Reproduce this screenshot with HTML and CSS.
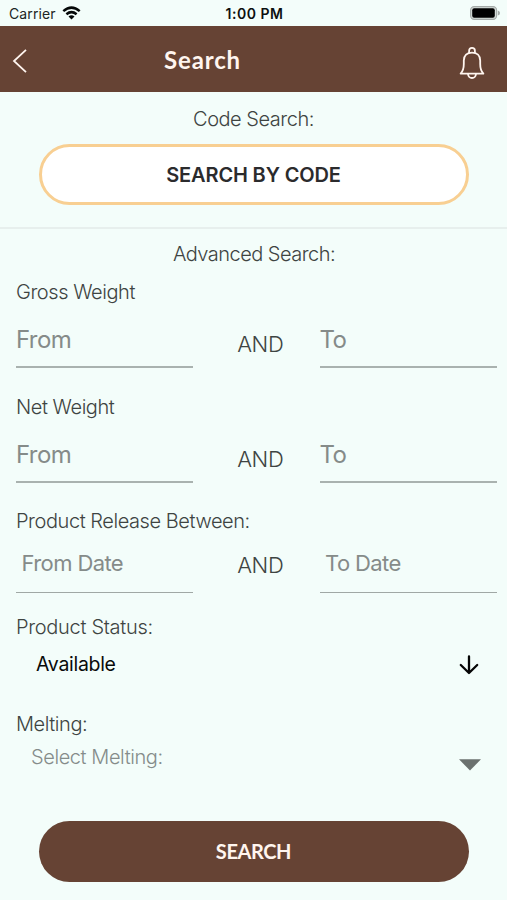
FILE: index.html
```html
<!DOCTYPE html>
<html lang="en">
<head>
<meta charset="utf-8">
<title>Search</title>
<link rel="stylesheet" href="styles.css">
</head>
<body>
<div class="status-bar">
  <div class="carrier"><span>Carrier</span>
    <svg class="wifi" width="19" height="14" viewBox="0 0 19 14"><path d="M9.5 13.5 6.5 10.4Q9.5 7.9 12.5 10.4Z" fill="#050808"/><path d="M4.4 8.2Q9.5 4 14.6 8.2M1.3 5.1Q9.5-1.8 17.7 5.1" fill="none" stroke="#050808" stroke-width="2.5"/></svg>
  </div>
  <span class="clock">1:00 PM</span>
  <svg class="battery" width="30" height="14" viewBox="0 0 30 14"><rect x=".6" y=".6" width="26" height="12.8" rx="3.6" fill="#d5dcd9" stroke="#a4aaa8" stroke-width="1.1"/><rect x="2.2" y="2.2" width="22.6" height="9.6" rx="2" fill="#000"/><path d="M27.8 4.5Q30 5 30 7T27.8 9.5Z" fill="#a4aaa8"/></svg>
</div>
<header class="app-bar">
  <svg class="back" width="16" height="26" viewBox="0 0 16 26"><path d="M14 1.8 2 13 14 24.2" fill="none" stroke="#fff5ef" stroke-width="1.8"/></svg>
  <h1>Search</h1>
  <svg class="bell" width="26" height="34" viewBox="0 0 26 34"><g fill="none" stroke="#fff5ef" stroke-width="1.8" stroke-linejoin="round"><path d="M10.1 7.2V4.7Q10.1 1.9 13 1.9T15.9 4.7V7.2"/><path d="M1.6 27.6Q4.8 24.5 4.8 18V14.5C4.8 9.5 8 6.6 13 6.6S21.2 9.5 21.2 14.5V18Q21.2 24.5 24.4 27.6Z"/><path d="M9 28Q9.5 32 13 32T17 28"/></g></svg>
</header>
<main>
  <section class="code-search">
    <h2>Code Search:</h2>
    <button class="pill outline">SEARCH BY CODE</button>
  </section>
  <form class="advanced">
    <h2 class="advanced-title">Advanced Search:</h2>
    <div class="label gross">Gross Weight</div>
    <div class="range"><div class="field">From</div><div class="and">AND</div><div class="field">To</div></div>
    <div class="label net">Net Weight</div>
    <div class="range"><div class="field">From</div><div class="and">AND</div><div class="field">To</div></div>
    <div class="label release">Product Release Between:</div>
    <div class="range dates"><div class="field">From Date</div><div class="and">AND</div><div class="field">To Date</div></div>
    <div class="label status">Product Status:</div>
    <div class="select available"><span>Available</span>
      <svg width="20" height="20" viewBox="0 0 20 20"><path d="M10 1.5V18M1.8 10 10 18 18.2 10" fill="none" stroke="#050505" stroke-width="2.3" stroke-linecap="round" stroke-linejoin="round"/></svg>
    </div>
    <div class="label melting">Melting:</div>
    <div class="select melt"><span>Select Melting:</span>
      <svg width="22" height="12" viewBox="0 0 22 12"><path d="M0 .3H22L11 11.5Z" fill="#6b716f"/></svg>
    </div>
    <button type="button" class="pill solid">SEARCH</button>
  </form>
</main>
</body>
</html>
```
FILE: styles.css
```css
* { box-sizing: border-box; }
body {
  margin: 0;
  height: 900px;
  overflow: hidden;
  background: #f3fdfa;
  color: #3e4442;
  font-family: Inter, sans-serif;
  font-weight: 300;
}
h1, h2 { margin: 0; font-weight: inherit; }
svg { display: block; flex: none; }

.status-bar {
  display: grid;
  grid-template-columns: 1fr auto 1fr;
  align-items: center;
  height: 25.5px;
  padding: 1px 7px 0 9px;
  font-size: 14px;
  color: #202524;
}
.carrier { display: flex; align-items: center; gap: 6px; font-weight: 400; letter-spacing: 0.1px; }
.clock { font-weight: 600; letter-spacing: 0.5px; color: #0d1010; }
.battery { justify-self: end; }

.app-bar {
  display: flex;
  align-items: center;
  height: 66.5px;
  padding: 4px 22px 0 12px;
  background: #664334;
  color: #fff5ef;
}
.app-bar h1 {
  flex: 1;
  padding: 0 0 2px 136px;
  font: 700 24px/30px Lato, sans-serif;
  letter-spacing: 0.85px;
}
.bell { margin-top: 5px; }

.code-search {
  height: 137px;
  padding-top: 12px;
  border-bottom: 2px solid #e7efed;
  text-align: center;
}
h2 { font-size: 20px; line-height: 30px; letter-spacing: -0.47px; text-align: center; }
.advanced-title { padding: 10px 0 0 1px; letter-spacing: -0.52px; }
.pill {
  display: block;
  width: 430px;
  height: 61px;
  margin: 0 auto;
  border-radius: 31px;
  border: 0;
}
.outline {
  margin-top: 10px;
  border: 3px solid #f8cf92;
  background: #fff;
  color: #2b2b2d;
  font: 600 20px/1 Inter, sans-serif;
  letter-spacing: -0.15px;
}
.solid {
  margin-top: 48px;
  padding-bottom: 3px;
  background: #664334;
  color: #fff5ef;
  font: 700 20px/1 Lato, sans-serif;
  letter-spacing: -0.4px;
}

.label { padding-left: 16px; font-size: 20px; line-height: 30px; letter-spacing: -0.44px; }
.gross { margin-top: 8px; }
.range {
  display: grid;
  grid-template-columns: 177px 1fr 177px;
  height: 61px;
  padding: 0 10.5px 0 16px;
}
.field {
  padding-top: 18px;
  border-bottom: 2px solid #a9b2af;
  color: #858b89;
  font-size: 24px;
  font-weight: 400;
  line-height: 30px;
  letter-spacing: -0.6px;
}
.and {
  padding: 22px 0 0 8px;
  text-align: center;
  font-size: 22px;
  line-height: 30px;
  letter-spacing: -0.4px;
}
.net { margin-top: 24px; }
.release { margin-top: 23px; }
.dates { height: 57px; }
.dates .field {
  padding: 12px 0 0 5.5px;
  border-bottom: 1.5px solid #a0a8a5;
  font-size: 22px;
}
.dates .and { padding-top: 14px; }
.status { margin-top: 19px; letter-spacing: -0.3px; }
.select { display: flex; justify-content: space-between; align-items: center; }
.available { height: 40px; padding: 3px 28px 0 36px; color: #090b0a; font-size: 19.5px; font-weight: 400; letter-spacing: -0.3px; }
.available svg { margin-top: 2px; }
.melting { margin-top: 27px; }
.melt { height: 34px; padding: 1px 26px 0 31px; color: #858c8a; font-size: 20px; letter-spacing: -0.42px; }
.melt svg { margin-top: 16px; }
```
